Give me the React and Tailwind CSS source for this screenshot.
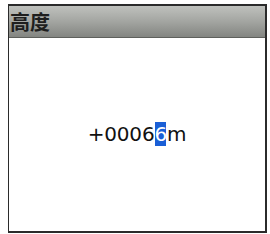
export default function App() {
  return (
    <div className="w-[270px] h-[234px] bg-white pt-[4px] pl-[8px]">
      <div className="w-[259px] h-[229px] border-2 border-l-[1.5px] border-[#2b2b2b] flex flex-col bg-white">
        <div className="h-[32px] shrink-0 bg-[linear-gradient(to_bottom,#bfc1bd,#a3a5a1_50%,#838581)] border-b border-[#5e605c] flex items-center pl-[1px]">
          <span className="text-[20px] leading-none font-bold text-[#1e1e1e] font-['Noto_Sans_CJK_SC',sans-serif]">高度</span>
        </div>
        <div className="flex-1 flex items-center justify-center pb-[2px]">
          <span className="text-[20px] leading-none text-[#111] font-['DejaVu_Sans',sans-serif] tracking-[-0.2px]">
            +0006
            <span className="text-white bg-no-repeat bg-center bg-[length:11px_24px] bg-[linear-gradient(#1a5fd6,#1a5fd6)] inline-block py-[2px]">6</span>
            m
          </span>
        </div>
      </div>
    </div>
  );
}
